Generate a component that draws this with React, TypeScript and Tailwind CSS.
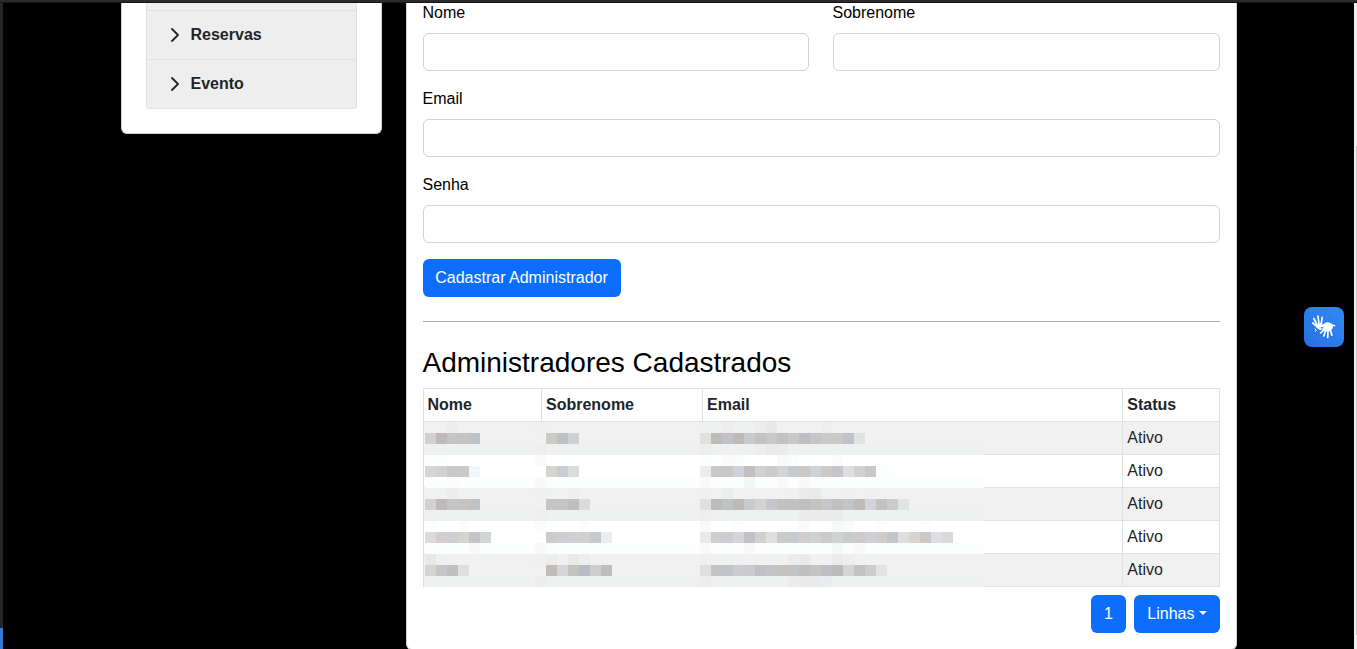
import React from 'react';

type Strip = Record<number, string>;
type Row = { top: Strip; mid: Strip; low: Strip };

const run = (start: number, colors: string): Strip =>
  Object.fromEntries(colors.split(' ').map((c, i) => [start + i, '#' + c]));

const rows: Row[] = [
  {
    top: { 2: '#ebeeed', 10: '#eff1f0', 25: '#eff1f0', 26: '#eff1f0', 27: '#ededed', 28: '#eff1f0', 29: '#eff1f0', 30: '#ededed', 31: '#e8e8e8', 34: '#f2f1f1', 36: '#eeeeef' },
    mid: { ...run(0, 'd1d1d1 bfbaba c3c5c6 c6c4c1 bfc2c7'), ...run(11, 'cbcac6 bdc0c7 d0d0d0'), ...run(25, 'e0e1df bfbbbb bfc3c6 bfbab6 c8cace c2c2c2 c8c8c8 bfc1c2 c8c8c6 bebec0 c4c6c8 cacaca cbc9c6 c1c2c9 e1e2e4') },
    low: { 10: '#efeeee', 25: '#ededed', 30: '#eeeded', 31: '#eaeaea', 32: '#ececed' },
  },
  {
    top: { 0: '#fafefd', 1: '#fdfdfd', 10: '#fafafa', 25: '#fafefd', 27: '#fbfaf9', 28: '#fafbfb', 32: '#faf9f9', 33: '#f9fdfc', 37: '#fcfcfc' },
    mid: { ...run(0, 'd5d5d5 d3d0d1 c8c9cd cbc9c8 f1f6fa'), ...run(11, 'd7d5d0 c8ccd3 dcdcdc'), ...run(25, 'eeebea c6c8cb c8c9c5 cfd2dc c3bebf d0d1d2 cec9cb d2d5d4 c8cbcd cbc8c7 d0d2d7 cec8c8 c5c6cb dfdedd d3d1d0 c9c7cc fafefe') },
    low: { 2: '#fbfbfb', 10: '#faf9f9', 25: '#faf9f9', 29: '#f4f5f5', 32: '#faf9f9', 34: '#faf9f9' },
  },
  {
    top: { 2: '#ebeeed', 10: '#eff1f0', 13: '#efefef', 25: '#eff1f0', 27: '#ededed', 33: '#eff1f0', 34: '#ebebeb', 35: '#e9eaea', 38: '#eff0f0', 40: '#eef0f1' },
    mid: { ...run(0, 'd1d1d1 bfbaba c3c5c6 c6c4c1 bfc2c7'), ...run(11, 'c5c5c5 c5c5c5 bfbfc0 dadbdd'), ...run(25, 'e0e1df bfbbbb bfc3c6 bfbab6 c8cace d3d2d0 c5c7cc c2c2c1 c1c1c1 bfbfc0 c3c3bf c5c7ca c2bfbc c3c4c8 bfbcb8 d3d4d9 c3c2c0 c9cccc e2e3e5') },
    low: { 10: '#efeeee', 25: '#efeeee', 34: '#ebebeb', 35: '#ebebeb', 36: '#ececec', 37: '#ebeded' },
  },
  {
    top: { 0: '#fdfdfd', 3: '#fdfdfd', 10: '#fbfbfb', 14: '#fdfdfd', 25: '#f9f9f9', 28: '#fdfdfd', 34: '#fcfbfb', 37: '#f9f9f9', 38: '#fafbfb', 41: '#fdfdfd', 45: '#fdfdfd' },
    mid: { ...run(0, 'dadadb d3cfd0 cecfd5 d5d4d1 c5c5c7 d2d6d6'), ...run(11, 'cecbcb ccced0 d3d0d3 d2d0cf c8c9cc eaecef'), ...run(25, 'e9e9e9 d0cdce cccdd1 d5d5d3 c1c3c9 d1d1d0 dfdfdf cccbc8 c8cad2 d3ccca ccd3d2 cbcbcc d1d3d2 c9cbcd cecac9 cdd1d5 cecbc8 c2c5cd e0dedd d6d5d2 ccc8ca dddee3 d8d9dc') },
    low: { 4: '#f9f9f9', 10: '#faf9f9', 25: '#faf9f9', 29: '#faf9f9', 37: '#f6f7f7', 38: '#fafcff', 39: '#faf9f9' },
  },
  {
    top: { 0: '#e8e8e6', 1: '#efefef', 10: '#eff1f0', 11: '#ededec', 13: '#e9e9e8', 14: '#eeeeee', 25: '#eff1f0', 33: '#ebeceb', 34: '#eaeaea', 37: '#ebebeb', 38: '#eeeeee' },
    mid: { ...run(0, 'd5d4d1 c5c6cb c0c0c0 dfdfdf'), ...run(11, 'c1bcb9 d2d7da c3c2bc b9bcc6 cececc bebebf'), ...run(25, 'e0e1df c5c5c6 c1c5c8 cbcbd0 cacad0 c3c0c1 c2c6ca c7c2c1 c0c4c8 bfbfc0 c4c4c1 bebfc6 bfbaba d2d6d9 c2c2c3 cccccc e2e3e5') },
    low: { 10: '#ededed', 25: '#ededed', 33: '#ececed', 34: '#eaeaea', 35: '#e9eaeb', 36: '#eaecef' },
  },
];

function Cells({ strip, base }: { strip: Strip; base: string }) {
  return (
    <div className="flex h-[11px] w-[559px] overflow-hidden" style={{ background: base }}>
      {Array.from({ length: 51 }, (_, i) => (
        <span key={i} className="h-[11px] w-[11px] shrink-0" style={{ background: strip[i] }} />
      ))}
    </div>
  );
}

function DataRow({ row, odd }: { row: Row; odd: boolean }) {
  const bg = odd ? '#f1f1f1' : '#ffffff';
  const low = odd ? '#eff1f0' : '#fcfefe';
  return (
    <div className={`relative grid h-[33px] grid-cols-[699px_1fr] border-x border-b border-[#dee2e6] ${odd ? 'bg-[#f1f1f1]' : 'bg-white'}`}>
      <div className="border-r border-[#dee2e6]" />
      <div className="pl-[4.3px] pt-1 leading-6">Ativo</div>
      <div className="absolute left-px top-0">
        <Cells strip={row.top} base={bg} />
        <Cells strip={row.mid} base={bg} />
        <Cells strip={row.low} base={low} />
      </div>
    </div>
  );
}

function Field({ label }: { label: string }) {
  return (
    <label className="mb-4 block text-black">
      <span className="-ml-[0.5px] mb-2 block leading-6">{label}</span>
      <input className="block h-[38px] w-full rounded-md border border-[#ced4da] bg-white px-3 outline-none" />
    </label>
  );
}

function MenuItem({ text }: { text: string }) {
  return (
    <div className="flex h-[49px] items-center border-t border-[#dee2e6] pl-6 font-bold text-[#212529]">
      <svg width="8" height="14" viewBox="0 0 8 14" fill="none" stroke="currentColor" strokeWidth="1.8" strokeLinecap="round" strokeLinejoin="round" className="mr-[11.5px]">
        <path d="M1 1l6 6-6 6" />
      </svg>
      {text}
    </div>
  );
}

function Hands() {
  return (
    <svg width="26" height="26" viewBox="0 0 26 26" fill="none" stroke="white" strokeLinecap="round" strokeLinejoin="round">
      <path d="M5.5 11L8 9.5l2.6.3 1 2-2.2 1.4.6 1.8-2.6-.4-2-1.8z" fill="white" strokeWidth="1" />
      <path d="M6 12.5L1.8 9M6.3 11.2L2.8 4.5M8.1 10.5L6.9 2M10.2 10.3L11.2 3.4" strokeWidth="1.7" />
      <path d="M6 13.4l3.2 2.2 2.4-.8M4 14.8l1.4 1.8-1.2.7" strokeWidth="1" />
      <path d="M12 10.8l3.4-2 3.6.3 2.4 1.8-.2 3.4-2.6 2.6-4.6.2-1.8-2.2 1.2-2.5-2 .3z" fill="white" strokeWidth="1" />
      <path d="M20.5 10.8l3 .9M13.4 15.4l-3.7 3.4M14.7 16.4l-1.9 5.6M17 16.6l-.3 7M19.2 15.6l1.7 5.6" strokeWidth="1.7" />
    </svg>
  );
}

export default function App() {
  return (
    <div className="flex h-[649px] w-[1357px] flex-col overflow-hidden bg-black font-['Liberation_Sans',sans-serif] text-base text-[#212529]">
      <div className="h-[3px] shrink-0 border-b border-[#151515] bg-[#2b2b2b]" />
      <div className="flex h-[646px]">
        <div className="flex w-[3px] flex-col bg-[#262626]">
          <div className="mt-auto h-[21px] bg-[#3478d3]" />
        </div>
        <div className="flex w-[1351px] items-start overflow-hidden pl-[118px]">
          <aside className="mr-6 h-[131px] w-[261px] rounded-b-md border-x border-b border-[#ced0d2] bg-white px-6">
            <div className="h-[106px] overflow-hidden rounded-b border-x border-b border-[#dee2e6] bg-[#eeeeee] pt-[7px]">
              <MenuItem text="Reservas" />
              <MenuItem text="Evento" />
            </div>
          </aside>
          <main className="h-[647px] w-[831px] shrink-0 rounded-b-md border-x border-b border-[#ced0d2] bg-white px-4">
            <div className="-mt-[2px]">
              <div className="grid grid-cols-[386px_387px] gap-6">
                <Field label="Nome" />
                <Field label="Sobrenome" />
              </div>
              <Field label="Email" />
              <Field label="Senha" />
              <button className="block h-[38px] w-[198px] rounded-md bg-[#0d6efd] pr-px text-white">Cadastrar Administrador</button>
              <hr className="mb-6 mt-6 border-[#adb0b2]" />
              <h3 className="-ml-[0.5px] mb-2 h-[34px] text-[28px] leading-[34px] text-black">Administradores Cadastrados</h3>
              <div>
                <div className="grid h-[34px] grid-cols-[118px_161px_420px_1fr] border border-[#dee2e6] font-bold leading-[31px]">
                  <div className="border-r border-[#dee2e6] pl-[3.5px]">Nome</div>
                  <div className="border-r border-[#dee2e6] pl-1">Sobrenome</div>
                  <div className="border-r border-[#dee2e6] pl-1">Email</div>
                  <div className="pl-[4.3px]">Status</div>
                </div>
                {rows.map((row, i) => (
                  <DataRow key={i} row={row} odd={i % 2 === 0} />
                ))}
              </div>
              <div className="mt-2 flex justify-end gap-2 text-white">
                <button className="h-[38px] w-[35px] rounded-md bg-[#0d6efd]">1</button>
                <button className="flex h-[38px] w-[86px] items-center rounded-md bg-[#0d6efd] pl-[13.3px]">
                  Linhas
                  <svg width="8" height="4" viewBox="0 0 8 4" className="mb-[2px] ml-[4.5px]">
                    <path d="M0 0h8L4 4z" fill="white" />
                  </svg>
                </button>
              </div>
            </div>
          </main>
          <div className="ml-[67px] mt-[304px] flex h-10 w-10 shrink-0 items-center justify-center rounded-lg bg-linear-to-bl from-[#3189f5] to-[#2672e0]">
            <Hands />
          </div>
        </div>
        <div className="flex w-[3px] justify-end bg-[#f1f1f1]">
          <div className="mt-[143px] h-[489px] w-px bg-[#c1c1c1]" />
        </div>
      </div>
    </div>
  );
}
